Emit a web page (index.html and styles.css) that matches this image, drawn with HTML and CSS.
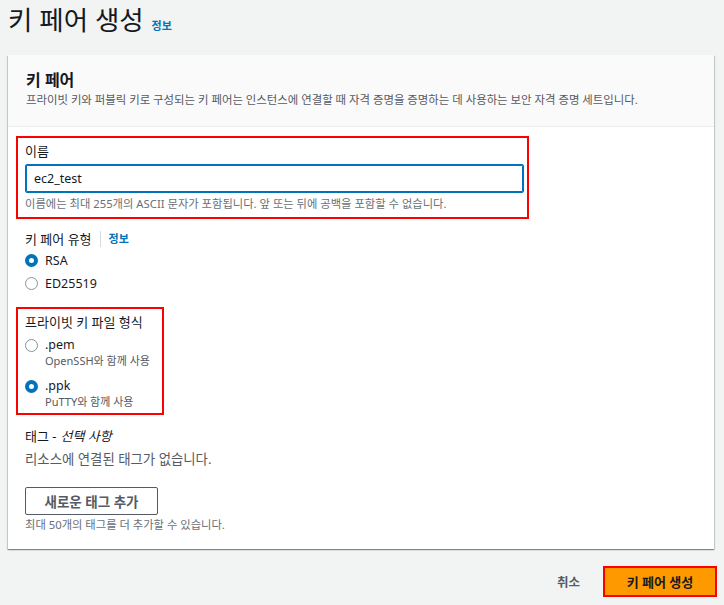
FILE: index.html
```html
<!DOCTYPE html>
<html lang="ko">
<head>
<meta charset="utf-8">
<link rel="stylesheet" href="styles.css">
</head>
<body>
<div class="page">
  <h1 class="title">키 페어 생성 <a class="info info-title">정보</a></h1>
  <div class="card">
    <div class="card-head">
      <h2>키 페어</h2>
      <p>프라이빗 키와 퍼블릭 키로 구성되는 키 페어는 인스턴스에 연결할 때 자격 증명을 증명하는 데 사용하는 보안 자격 증명 세트입니다.</p>
    </div>
    <div class="card-body">
      <div class="hl hl-name">
        <div class="label">이름</div>
        <div class="input">ec2_test</div>
        <div class="hint">이름에는 최대 255개의 ASCII 문자가 포함됩니다. 앞 또는 뒤에 공백을 포함할 수 없습니다.</div>
      </div>
      <div class="field-type">
        <div class="label">키 페어 유형<span class="sep"></span><a class="info">정보</a></div>
        <div class="radio checked"><span class="dot"></span><span class="rlabel">RSA</span></div>
        <div class="radio"><span class="dot"></span><span class="rlabel">ED25519</span></div>
      </div>
      <div class="hl hl-format">
        <div class="label">프라이빗 키 파일 형식</div>
        <div class="radio radio-desc"><span class="dot"></span><div><div class="rlabel">.pem</div><div class="rdesc">OpenSSH와 함께 사용</div></div></div>
        <div class="radio radio-desc checked"><span class="dot"></span><div><div class="rlabel">.ppk</div><div class="rdesc">PuTTY와 함께 사용</div></div></div>
      </div>
      <div class="tags">
        <div class="label">태그 - <i>선택 사항</i></div>
        <div class="empty">리소스에 연결된 태그가 없습니다.</div>
        <button class="btn-normal">새로운 태그 추가</button>
        <div class="hint">최대 50개의 태그를 더 추가할 수 있습니다.</div>
      </div>
    </div>
  </div>
  <div class="actions">
    <a class="cancel">취소</a>
    <span class="hl-btn"><button class="btn-primary">키 페어 생성</button></span>
  </div>
</div>
</body>
</html>
```
FILE: styles.css
```css
* { box-sizing: border-box; }
html, body { margin: 0; padding: 0; }
body {
  background: #f2f3f3;
  font-family: "Noto Sans", "Noto Sans CJK KR", sans-serif;
  color: #16191f;
  width: 724px;
  height: 605px;
  overflow: hidden;
}
.page { padding: 0 10px 0 8px; }
.title {
  margin: 0;
  padding-top: 1px;
  height: 55px;
  font-size: 26.5px;
  font-weight: 400;
  line-height: 38px;
  color: #16191f;
}
.info {
  color: #0073bb;
  font-weight: 700;
  font-size: 11px;
  text-decoration: none;
}
.info-title { margin-left: 1px; }
.card {
  background: #fff;
  box-shadow: 0 1px 1px 0 rgba(0,28,36,.3), 1px 1px 1px 0 rgba(0,28,36,.15), -1px 1px 1px 0 rgba(0,28,36,.15);
  height: 494px;
}
.card-head {
  background: #fafafa;
  border-bottom: 1px solid #eaeded;
  height: 72px;
  padding: 14px 18px 0 18px;
}
.card-head h2 {
  margin: 0;
  font-size: 16px;
  font-weight: 700;
  line-height: 22px;
}
.card-head p {
  margin: 1px 0 0;
  font-size: 11.4px;
  line-height: 16px;
  color: #545b64;
  white-space: nowrap;
}
.card-body { padding: 9px 17px 0 17px; }
.hl { border: 2px solid #ff0000; margin-left: -9px; }
.hl-name { width: 513px; padding: 4px 3px 6px 7px; }
.label { font-size: 13px; line-height: 18px; color: #16191f; display: flex; align-items: center; }
.input {
  margin-top: 4px;
  height: 29px;
  border: 1px solid #0073bb;
  box-shadow: 0 0 0 1px #0073bb inset;
  border-radius: 2px;
  padding: 0 8px;
  font-size: 12.5px;
  line-height: 27px;
  color: #16191f;
}
.hint { font-size: 11.3px; line-height: 15px; color: #687078; margin-top: 3px; white-space: nowrap; }
.field-type { margin-top: 11px; }
.sep { display: inline-block; width: 1px; height: 16px; background: #d5dbdb; margin: 0 8px 0 8px; }
.radio { display: flex; align-items: center; font-size: 12.5px; line-height: 19px; }
.field-type .radio { margin-top: 3px; }
.field-type .radio + .radio { margin-top: 4px; }
.radio .dot {
  width: 13px; height: 13px; border-radius: 50%;
  border: 1.5px solid #879596; background: #fff;
  margin-right: 7px; flex: none;
}
.radio.checked .dot { border: 4px solid #0073bb; }
.hl-format { width: 148px; margin-top: 14px; padding: 4px 0 4px 7px; }
.radio-desc { align-items: flex-start; margin-top: 5px; }
.radio-desc .rlabel { line-height: 18px; }
.radio-desc .dot { margin-top: 3px; }
.radio-desc + .radio-desc { margin-top: 9px; }
.rdesc { font-size: 11px; line-height: 14px; color: #545b64; }
.tags { margin-top: 12px; }
.tags i { font-style: italic; margin-left: 4px; }
.empty { margin-top: 5px; font-size: 13.4px; line-height: 18px; color: #545b64; }
.btn-normal {
  display: block;
  margin-top: 19px;
  height: 28px;
  width: 133px;
  border: 1px solid #545b64;
  border-radius: 2px;
  background: #fff;
  font-family: inherit;
  font-size: 13.5px;
  font-weight: 700;
  color: #545b64;
  padding: 0;
}
.tags .hint { margin-top: 2px; }
.actions {
  display: flex;
  justify-content: flex-end;
  align-items: center;
  margin-top: 17px;
  margin-right: -3px;
}
.cancel { font-size: 12.5px; font-weight: 700; color: #545b64; margin-right: 23px; }
.hl-btn { display: block; border: 2px solid #ff0000; }
.btn-primary {
  display: block;
  width: 110px;
  height: 27px;
  border: 0;
  background: #ff9900;
  font-family: inherit;
  font-size: 13px;
  font-weight: 700;
  color: #16191f;
  padding: 0;
}
```
